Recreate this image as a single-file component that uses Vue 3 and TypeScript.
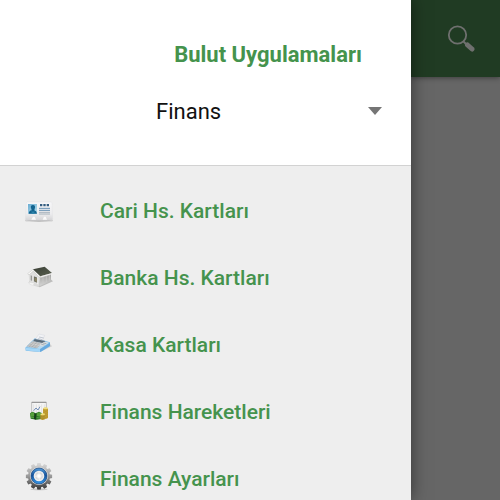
<script setup lang="ts">
import { ref } from 'vue'

type IconName = 'card' | 'bank' | 'register' | 'chart' | 'gear'

interface MenuItem {
  label: string
  icon: IconName
}

const modules: string[] = ['Finans']
const selected = ref<string>('Finans')

const items: MenuItem[] = [
  { label: 'Cari Hs. Kartları', icon: 'card' },
  { label: 'Banka Hs. Kartları', icon: 'bank' },
  { label: 'Kasa Kartları', icon: 'register' },
  { label: 'Finans Hareketleri', icon: 'chart' },
  { label: 'Finans Ayarları', icon: 'gear' },
]

const teeth: number[] = Array.from({ length: 12 }, (_, i) => i * 30)
</script>

<template>
  <div class="app">
    <aside class="drawer">
      <header class="drawer-head">
        <h1 class="title">Bulut Uygulamaları</h1>
        <div class="picker">
          <select v-model="selected" class="select" aria-label="Modül">
            <option v-for="m in modules" :key="m" :value="m">{{ m }}</option>
          </select>
          <svg class="caret" viewBox="0 0 14 8" aria-hidden="true"><path d="M0 0H14L7 8Z" fill="#757575" /></svg>
        </div>
      </header>
      <nav class="menu">
        <a v-for="item in items" :key="item.label" class="item" href="#">
          <svg v-if="item.icon === 'card'" class="icon" viewBox="0 -6 150 135" aria-hidden="true">
            <defs>
              <linearGradient id="cardFace" x2="0" y2="1"><stop stop-color="#f7f7f8" /><stop offset=".65" stop-color="#ececee" /><stop offset="1" stop-color="#d4d4d6" /></linearGradient>
              <linearGradient id="cardPhoto" x2="1" y2="1"><stop stop-color="#6badd2" /><stop offset="1" stop-color="#b5dfee" /></linearGradient>
            </defs>
            <ellipse cx="72" cy="92" rx="42" ry="3" fill="#999" opacity=".7" />
            <path d="M37 36H108Q111 36 111 40L113 88Q113 91 110 91H34Q31 91 31 88L34 40Q34 36 37 36Z" fill="url(#cardFace)" stroke="#dddde0" />
            <path d="M49 89l5-9h5l4 9M83 89l4-9h5l4 9" fill="#fafafa" />
            <rect x="39" y="42" width="27" height="29" fill="url(#cardPhoto)" />
            <path d="M41 71Q42 62 50 61L49 57Q44 46 54 45Q63 46 59 57L58 61Q66 63 66 71Z" fill="#13648f" />
            <path d="M50 61L54 67L58 61V71H50Z" fill="#2c83aa" />
            <path d="M75 42h7v7h-7zM85 42h7v7h-7zM95 42h7v7h-7z" fill="#345d80" />
            <path d="M72 55h33M72 61h33" stroke="#6590b2" stroke-width="3" />
            <path d="M72 67h33M72 72h33" stroke="#8494a1" stroke-width="2" />
          </svg>

          <svg v-else-if="item.icon === 'bank'" class="icon" viewBox="0 0 150 135" aria-hidden="true">
            <defs>
              <linearGradient id="bankWall" x2="0" y2="1"><stop stop-color="#9b9b99" /><stop offset="1" stop-color="#d6d6d5" /></linearGradient>
              <linearGradient id="bankRoof" x2="1" y2="1"><stop stop-color="#3a3f36" /><stop offset="1" stop-color="#59604f" /></linearGradient>
            </defs>
            <path d="M41 83L74 97L114 79L105 71L45 76Z" fill="#bdbdbc" />
            <path d="M54 44L41 57L43 82L72 94L76 64Z" fill="#dededd" />
            <path d="M75 62L108 52V77L73 94Z" fill="url(#bankWall)" />
            <path d="M84 66V86M94 63V81M103 60V77" stroke="#cdcdcc" stroke-width="2" />
            <path d="M54 43L38 56L42 60L55 48L72 67L77 64Z" fill="#f8f8f7" stroke="#aaaaa8" />
            <path d="M54 43L89 35L111 54L76 64Z" fill="url(#bankRoof)" />
            <path d="M76 64L111 54V58L76 68Z" fill="#edeceb" />
            <path d="M47 61L52 63V78L47 76Z" fill="#9a9a98" />
            <path d="M56 64L68 68V84L56 79Z" fill="#6c6e64" />
            <path d="M59 68L66 70V81L59 78Z" fill="#8b8567" />
            <path d="M54 62V80M68 66V88" stroke="#f5f5f4" stroke-width="3" />
            <path d="M42 81L58 84L55 92L43 87Z" fill="#f4f4f3" stroke="#cecece" />
            <path d="M57 85L72 90L70 96L56 92Z" fill="#dadad9" />
          </svg>

          <svg v-else-if="item.icon === 'register'" class="icon" viewBox="0 0 150 135" aria-hidden="true">
            <path d="M75 90L111 73L106 67L34 86Z" fill="#bbb" opacity=".6" />
            <path d="M31 77L60 48L105 61V72L76 90L32 86Z" fill="#81bee9" />
            <path d="M33 75L60 50L103 62L75 81Z" fill="#b8d9ee" />
            <path d="M32 77L75 82V90L33 85Z" fill="#a3d6f8" />
            <path d="M75 82L105 62V72L76 90Z" fill="#66a9df" />
            <path d="M62 50L72 36L89 40L82 56Z" fill="#f1f2f5" stroke="#c8ccd4" />
            <path d="M72 45L86 48M69 50L82 53" stroke="#a9b2bc" stroke-width="2" />
            <path d="M59 51L91 57L86 64L54 58Z" fill="#596a78" />
            <path d="M53 58L81 64L66 78L36 73Z" fill="#d1d0cf" stroke="#9ba2a8" />
            <path d="M49 62L75 67M44 67L70 73M40 71L65 76M57 59L42 75M65 61L50 76M73 63L58 78" stroke="#8f9498" stroke-width="1" />
            <path d="M87 59L99 62L84 73L72 70Z" fill="#dadddf" />
            <path d="M84 63L94 65M79 67L89 69" stroke="#8c9ba7" stroke-width="2" />
          </svg>

          <svg v-else-if="item.icon === 'chart'" class="icon" viewBox="0 -3 150 135" aria-hidden="true">
            <rect x="50" y="37" width="44" height="46" rx="1" fill="#f5f5f5" stroke="#a3a3a3" stroke-width="2" />
            <path d="M50 37H94" stroke="#8e8e8e" stroke-width="3" />
            <path d="M56 43V77M64 43V77M72 43V77M80 43V77M88 43V77" stroke="#d8d8d8" stroke-width="2" />
            <path d="M56 62L63 54L69 60L75 50" fill="none" stroke="#738fb8" stroke-width="3" />
            <path d="M84 56Q91 51 99 56V84Q91 90 84 85Z" fill="#c6a133" />
            <ellipse cx="92" cy="55" rx="7" ry="3" fill="#eedc7b" />
            <path d="M85 62q7 4 14 0M85 68q7 4 14 0M85 74q7 4 14 0M85 80q7 4 14 0" fill="none" stroke="#8d721c" stroke-width="1" />
            <path d="M45 70L52 65L62 70L72 65L81 70L78 87L65 89L47 86Z" fill="#2b7523" />
            <path d="M46 70L53 67L60 70V78L47 80ZM66 70L73 67L80 71L76 80L65 78Z" fill="#57a13c" />
            <path d="M58 68L64 73L63 89L57 87Z" fill="#173f19" />
            <path d="M48 82L57 82M65 83L76 84" stroke="#78b85b" stroke-width="2" />
            <path d="M76 74Q83 70 90 74V88Q83 92 76 88Z" fill="#b99931" />
            <ellipse cx="83" cy="73" rx="7" ry="3" fill="#f0df79" />
            <path d="M77 79q6 4 12 0M77 84q6 4 12 0" fill="none" stroke="#897018" />
          </svg>

          <svg v-else class="icon" viewBox="0 6 150 135" aria-hidden="true">
            <defs>
              <linearGradient id="gearMetal" x2="0" y2="1"><stop stop-color="#dedede" /><stop offset=".5" stop-color="#999" /><stop offset="1" stop-color="#303030" /></linearGradient>
              <linearGradient id="gearRing" x2="0" y2="1"><stop stop-color="#4b91cf" /><stop offset=".45" stop-color="#14529b" /><stop offset="1" stop-color="#318fdf" /></linearGradient>
              <clipPath id="gearShape">
                <circle cx="72" cy="67" r="33" />
                <path v-for="a in teeth" :key="a" d="M67 27H77L79 38H65Z" :transform="`rotate(${a} 72 67)`" />
              </clipPath>
            </defs>
            <ellipse cx="72" cy="106" rx="26" ry="3" fill="#999" opacity=".45" />
            <rect x="30" y="25" width="84" height="84" fill="url(#gearMetal)" clip-path="url(#gearShape)" />
            <circle cx="72" cy="66" r="27" fill="#e3e3e3" />
            <circle cx="72" cy="66" r="20" fill="#ededee" stroke="url(#gearRing)" stroke-width="8" />
            <circle cx="72" cy="66" r="24" fill="none" stroke="#123f78" stroke-width="2" />
            <circle cx="72" cy="66" r="10" fill="none" stroke="#d7d9db" stroke-width="4" stroke-dasharray="12 4" />
            <circle cx="72" cy="66" r="5" fill="#fff" />
          </svg>
          <span>{{ item.label }}</span>
        </a>
      </nav>
    </aside>

    <main class="content">
      <header class="toolbar">
        <button class="search" type="button" aria-label="Ara">
          <svg viewBox="0 0 28 28" width="28" height="28" aria-hidden="true">
            <circle cx="10.5" cy="10" r="8.7" fill="none" stroke="#6f706f" stroke-width="1.8" />
            <path d="M16 16L20 20" stroke="#6f706f" stroke-width="2" />
            <path d="M20.5 20L25 24" stroke="#6f706f" stroke-width="5" stroke-linecap="round" />
          </svg>
        </button>
      </header>
    </main>
  </div>
</template>

<style>
body {
  margin: 0;
}
</style>

<style scoped>
.app {
  display: flex;
  height: 100vh;
  overflow: hidden;
  font-family: Roboto, "Liberation Sans", sans-serif;
  font-size: 21px;
  background: #666;
}

.drawer {
  flex: 1;
  min-width: 0;
  display: flex;
  flex-direction: column;
  background: #eee;
  box-shadow: 0 0 16px rgba(0, 0, 0, 0.5);
  z-index: 1;
}

.drawer-head {
  box-sizing: border-box;
  flex: none;
  height: 166px;
  padding: 41px 29px 0 152px;
  background: #fff;
  border-bottom: 1px solid #d2d2d2;
}

.title {
  margin: 0 20px 0 0;
  font-size: 22px;
  line-height: 28px;
  font-weight: 700;
  text-align: right;
  white-space: nowrap;
  color: #45934d;
}

.picker {
  display: flex;
  align-items: center;
  height: 32px;
  margin-top: 26px;
}

.select {
  flex: 1;
  min-width: 0;
  height: 32px;
  margin: 0 -14px 0 0;
  padding: 0 14px 0 4px;
  border: 0;
  background: transparent;
  appearance: none;
  font-family: inherit;
  font-size: 22px;
  color: #111;
}

.caret {
  flex: none;
  width: 14px;
  height: 8px;
  pointer-events: none;
}

.menu {
  flex: 1;
  min-height: 0;
  padding-top: 11px;
  overflow-y: auto;
  scrollbar-width: none;
}

.item {
  display: flex;
  align-items: center;
  gap: 35px;
  height: 67px;
  padding: 0 15px;
  font-weight: 500;
  white-space: nowrap;
  text-decoration: none;
  color: #45934d;
}

.icon {
  flex: none;
  width: 50px;
  height: 45px;
}

.content {
  flex: none;
  width: 89px;
}

.toolbar {
  box-sizing: border-box;
  display: flex;
  align-items: center;
  justify-content: center;
  height: 77px;
  padding-left: 10px;
  background: #203b23;
  box-shadow: 0 1px 5px rgba(0, 0, 0, 0.4);
}

.search {
  display: flex;
  padding: 0;
  border: 0;
  background: transparent;
}
</style>
